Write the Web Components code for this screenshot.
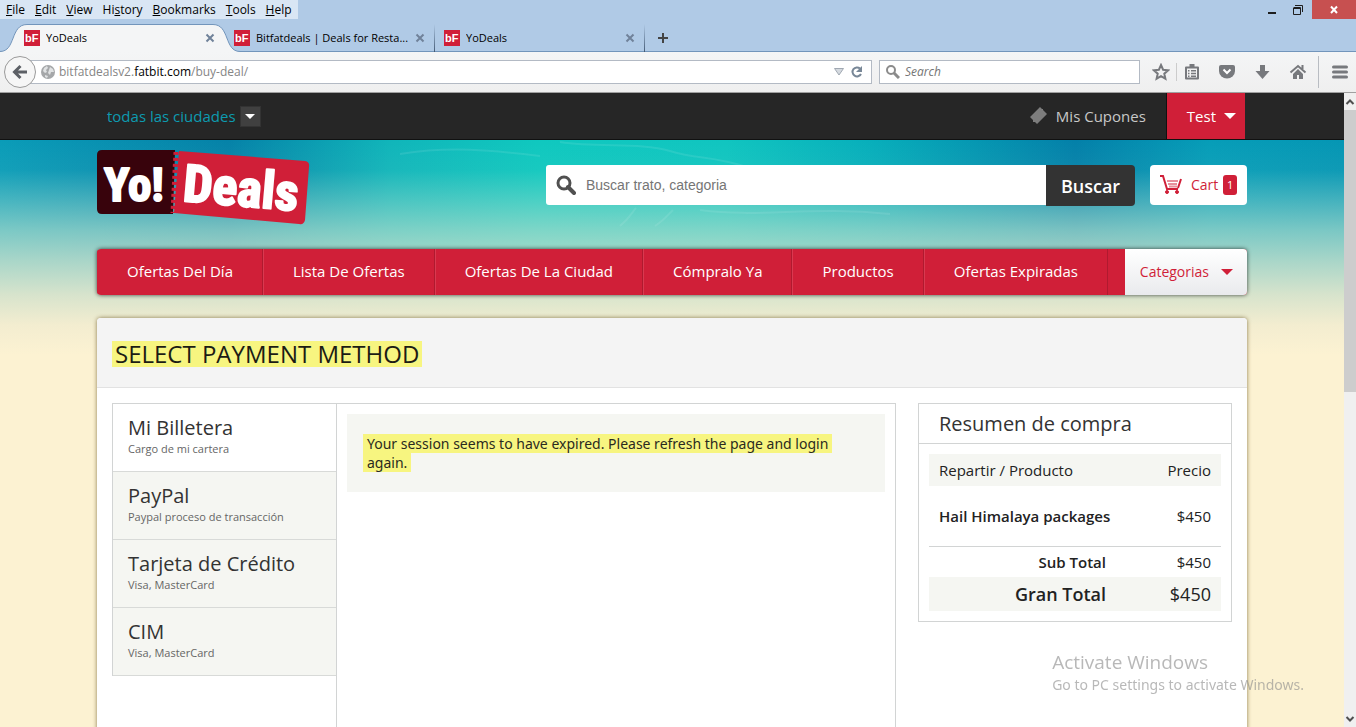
<!DOCTYPE html>
<html lang="es">
<head>
<meta charset="utf-8">
<meta name="viewport" content="width=device-width, initial-scale=1">
<title>YoDeals</title>
<style>
html, body { margin: 0; height: 100%; }
body { font-family: "Open Sans", "Noto Sans", sans-serif; font-size: 14px; line-height: 20px; color: #333; overflow: hidden; }
</style>
</head>
<body>
<browser-window>
  <menu-bar slot="menu"></menu-bar>
  <window-controls slot="menu"></window-controls>
  <tab-strip slot="tabs">
    <browser-tab active>YoDeals</browser-tab>
    <browser-tab>Bitfatdeals | Deals for Resta...</browser-tab>
    <browser-tab>YoDeals</browser-tab>
  </tab-strip>
  <nav-toolbar slot="toolbar"></nav-toolbar>
  <site-page>
    <site-topbar slot="top"></site-topbar>
    <site-header></site-header>
    <site-nav></site-nav>
    <payment-panel>
      <h1 slot="title">SELECT PAYMENT METHOD</h1>
      <payment-option slot="options" active>Mi Billetera<span slot="note">Cargo de mi cartera</span></payment-option>
      <payment-option slot="options">PayPal<span slot="note">Paypal proceso de transacción</span></payment-option>
      <payment-option slot="options">Tarjeta de Crédito<span slot="note">Visa, MasterCard</span></payment-option>
      <payment-option slot="options">CIM<span slot="note">Visa, MasterCard</span></payment-option>
      <session-message slot="content">Your session seems to have expired. Please refresh the page and login again.</session-message>
      <purchase-summary slot="aside"></purchase-summary>
    </payment-panel>
  </site-page>
  <page-scrollbar slot="scroll"></page-scrollbar>
  <activation-notice slot="overlay"></activation-notice>
</browser-window>

<script>
function define(name, markup) {
  const template = document.createElement('template');
  template.innerHTML = '<style>*,:host{box-sizing:border-box}a{color:inherit;text-decoration:none}button{font:inherit;border:0;padding:0;margin:0;background:none;color:inherit;cursor:pointer}input{font:inherit;border:0;padding:0;margin:0;outline:0;background:none;min-width:0}svg{display:block;flex:none}</style>' + markup;
  customElements.define(name, class extends HTMLElement {
    constructor() {
      super();
      this.attachShadow({ mode: 'open' }).append(template.content.cloneNode(true));
    }
  });
}

define('browser-window', `
<style>
:host { display: flex; flex-direction: column; height: 100vh; background: #b0cae6; position: relative; }
.menu { display: flex; justify-content: space-between; align-items: flex-start; height: 24px; }
.view { flex: 1; min-height: 0; display: flex; }
</style>
<div class="menu"><slot name="menu"></slot></div>
<slot name="tabs"></slot>
<slot name="toolbar"></slot>
<div class="view"><slot></slot><slot name="scroll"></slot></div>
<slot name="overlay"></slot>`);

define('menu-bar', `
<style>
:host { display: flex; height: 19px; padding: 0 1px; background: #d9e6f4; font-size: 12px; line-height: 19px; color: #000; }
button { padding: 0 5px; }
</style>
<button><u>F</u>ile</button><button><u>E</u>dit</button><button><u>V</u>iew</button><button>Hi<u>s</u>tory</button><button><u>B</u>ookmarks</button><button><u>T</u>ools</button><button><u>H</u>elp</button>`);

define('window-controls', `
<style>
:host { display: flex; height: 19px; }
button { width: 26px; display: grid; place-items: center; }
.close { width: 44px; background: #c75050; margin-left: 1px; }
</style>
<button aria-label="Minimize"><svg width="12" height="12"><path d="M2 8h8v2H2z" fill="#1e1e1e"/></svg></button>
<button aria-label="Restore"><svg width="12" height="12" fill="none" stroke="#1e1e1e"><path d="M1.500 4v6.500h7V3.500h-7M1 4.500h8M3 1.500h7.500V8"/></svg></button>
<button class="close" aria-label="Close"><svg width="10" height="10"><path d="M2 1.500l6 6.500M8 1.500L2 8" stroke="#fff" stroke-width="2"/></svg></button>`);

define('tab-strip', `
<style>
:host { display: flex; height: 28px; padding-left: 15px; box-shadow: inset 0 -1px #7295bb; }
button { width: 36px; display: grid; place-items: center; }
</style>
<slot></slot>
<button aria-label="New tab"><svg width="10" height="10"><path d="M5 0v10M0 5h10" stroke="#444" stroke-width="2"/></svg></button>`);

define('browser-tab', `
<style>
:host { display: block; flex: 0 1 210px; min-width: 0; position: relative; }
.row { height: 28px; display: flex; align-items: center; padding: 0 9px; gap: 6px; position: relative; font-size: 11px; color: #000; }
:host(:not([active])) { background: linear-gradient(transparent, #445a75) right / 1px 100% no-repeat; }
.title { flex: 1; white-space: nowrap; overflow: hidden; }
.shape { display: none; position: absolute; left: -15px; top: 0; width: calc(100% + 30px); height: 28px; }
:host([active]) .shape { display: block; }
:host([active]) { z-index: 1; }
.shape svg { width: 100%; }
</style>
<div class="shape"><svg height="28" viewBox="0 0 240 28"><path d="M0 28v-.500C16 27.500 10 .500 27 .500H213C230 .500 224 27.500 240 27.500v.500z" fill="#f4f5f6"/><path d="M0 27.500C16 27.500 10 .500 27 .500H213C230 .500 224 27.500 240 27.500" fill="none" stroke="#7295bb"/></svg></div>
<div class="row">
<svg width="16" height="16"><path d="M0 0h16v16H0z" fill="#d01f38"/><text x="1" y="12" font-family="Liberation Sans" font-size="11" font-weight="700" fill="#fff">bF</text></svg>
<span class="title"><slot></slot></span>
<button aria-label="Close tab"><svg width="12" height="10"><path d="M2.500 1.500l7 7M9.500 1.500l-7 7" stroke="#70829a" stroke-width="2"/></svg></button>
</div>`);

define('nav-toolbar', `
<style>
:host { display: flex; align-items: center; height: 41px; padding: 0 8px 0 4px; background: linear-gradient(#f4f5f6, #efefef); border-bottom: 1px solid #a0a0a0; font-size: 12px; color: #858585; }
.back { width: 32px; height: 32px; border: 1px solid #9a9a9a; border-radius: 50%; background: #f6f6f6; display: grid; place-items: center; z-index: 1; }
.url { flex: 1; height: 24px; display: flex; align-items: center; gap: 4px; margin-left: -8px; padding: 0 5px 0 12px; border: 1px solid #b3bac4; background: #fff; min-width: 0; }
.url a { flex: 1; white-space: nowrap; }
.url b { font-weight: 400; color: #000; }
.search { width: 261px; height: 24px; display: flex; align-items: center; gap: 5px; margin: 0 12px 0 7px; padding: 0 6px; border: 1px solid #b3bac4; background: #fff; }
.search input { flex: 1; font-style: italic; }
.search input::placeholder { color: #757575; opacity: 1; }
.icons { display: flex; align-items: center; gap: 19px; color: #77797d; }
.icons button:first-child { margin-right: -11px; padding-right: 6px; border-right: 1px solid #ccc; }
.icons button:last-child { padding-left: 13px; border-left: 1px solid #b8bcc2; height: 32px; margin: 0 0 0 -8px; }
</style>
<button class="back" aria-label="Back"><svg width="16" height="16" fill="none" stroke="#5d6066" stroke-width="3"><path d="M15 8H3M8.500 2L2.500 8l6 6"/></svg></button>
<div class="url">
<svg width="14" height="14" viewBox="0 0 14 14"><circle cx="7" cy="7" r="7" fill="#a5a7a9"/><path d="M3 3l3-2 1 2-2 2 1 2-2 1-2-2zM9 2l3 2 1 3-3 0-1 3-2-2 1-3zM4 10l3 1-1 2-2-1z" fill="#e0e2e3"/></svg>
<a href="#">bitfatdealsv2.<b>fatbit.com</b>/buy-deal/</a>
<button aria-label="History"><svg width="10" height="8"><path d="M.500 .500h9L5 7z" fill="#d4d9df" stroke="#a0a8b2"/></svg></button>
<button aria-label="Reload"><svg width="18" height="14"><path d="M12 3.500A4.500 4.500 0 1 0 13 9" fill="none" stroke="#788797" stroke-width="2"/><path d="M14 1v6H8z" fill="#788797"/></svg></button>
</div>
<label class="search"><svg width="14" height="14" fill="none" stroke="#8b8b8b" stroke-width="2"><circle cx="5" cy="5" r="4"/><path d="M8 8l5 5" stroke-width="3"/></svg><input type="search" placeholder="Search" aria-label="Search"></label>
<div class="icons">
<button aria-label="Bookmark"><svg width="18" height="18"><path d="M9 2l2.100 4.700 5 .600-3.800 3.400 1.100 5L9 13.200l-4.400 2.500 1.100-5L1.900 7.300l5-.600z" fill="none" stroke="currentColor" stroke-width="2"/></svg></button>
<button aria-label="Bookmarks list"><svg width="14" height="16"><path d="M1 3.500h12v11H1z" fill="none" stroke="currentColor" stroke-width="2" stroke-linejoin="round"/><path d="M4.500 0h5v3h-5zM3 6h1.500v1.500H3zM6 6h5v1.500H6zM3 8.700h1.500v1.500H3zM6 8.700h5v1.500H6zM3 11.400h1.500v1.500H3zM6 11.400h5v1.500H6z" fill="currentColor"/></svg></button>
<button aria-label="Pocket"><svg width="18" height="16"><path d="M3 1h12q2 0 2 2v4a8 7.500 0 0 1-16 0V3q0-2 2-2z" fill="currentColor"/><path d="M5.500 5.500L9 9l3.500-3.500" fill="none" stroke="#fff" stroke-width="2"/></svg></button>
<button aria-label="Downloads"><svg width="15" height="16"><path d="M5 1h5v6h4.500L7.500 15 .500 7H5z" fill="currentColor"/></svg></button>
<button aria-label="Home"><svg width="18" height="16"><path d="M9 5l5 5v5h-4v-4H8v4H4v-5z" fill="currentColor"/><path d="M1.500 8.500L9 2l7.500 6.500M13.500 1v4" fill="none" stroke="currentColor" stroke-width="2"/></svg></button>
<button aria-label="Menu"><svg width="16" height="14"><path d="M1.500 2h13M1.500 7h13M1.500 12h13" stroke="currentColor" stroke-width="3" stroke-linecap="round"/></svg></button>
</div>`);

define('page-scrollbar', `
<style>
:host { flex: none; width: 12px; display: flex; flex-direction: column; align-items: center; background: #f0f0f0; }
button { height: 17px; display: grid; place-items: center; }
.track { flex: 1; width: 12px; }
.thumb { height: 47%; background: #cdcdcd; }
</style>
<button aria-label="Scroll up"><svg width="10" height="8"><path d="M1.500 6L5 2.500 8.500 6" fill="none" stroke="#505050" stroke-width="2"/></svg></button>
<div class="track"><div class="thumb"></div></div>
<button aria-label="Scroll down"><svg width="10" height="8"><path d="M1.500 2L5 5.500 8.500 2" fill="none" stroke="#505050" stroke-width="2"/></svg></button>`);

define('activation-notice', `
<style>
:host { position: absolute; right: 52px; bottom: 32px; color: rgba(140,140,140,.62); pointer-events: none; white-space: nowrap; font-family: "Noto Sans", "Open Sans", sans-serif; font-size: 14px; line-height: 20px; z-index: 3; }
strong { display: block; font-family: "Open Sans", sans-serif; font-weight: 400; font-size: 19px; line-height: 26px; }
</style>
<strong>Activate Windows</strong>Go to PC settings to activate Windows.`);

define('site-page', `
<style>
:host { flex: 1; min-width: 0; overflow: hidden auto; scrollbar-width: none; background: #fcf2d2; }
.sea { position: relative; background:
 linear-gradient(rgba(170,222,205,0) 0, rgba(170,222,205,.060) 30px, rgba(170,222,205,.380) 60px, rgba(172,220,203,.700) 90px, rgba(190,222,203,.880) 120px, rgba(222,230,205,.970) 155px, #f3edd0 185px, #fcf2d2 215px),
 linear-gradient(90deg, #0a9cb8, #0582a8 17%, #10b5ba 29%, #0fc8bf 40%, #10c5c0 54%, #07aebb 65%, #0380a9 80%, #069db8 90%, #0596b4); }
.waves { position: absolute; inset: 0 0 auto 0; width: 100%; }
.wrap { position: relative; max-width: 1150px; margin: 0 auto; }
</style>
<slot name="top"></slot>
<div class="sea">
<svg class="waves" height="110" viewBox="0 0 1344 110" preserveAspectRatio="none" fill="none" stroke="#fff" stroke-opacity=".090" stroke-width="2"><path d="M560 2c40 6 80 0 110 9s40 4 80 17M400 14c50-8 90-4 140 2M620 86c10-8 12-14 16-18M655 86c8-5 10-8 18-16M700 70c60 8 110-4 190 4"/></svg>
<div class="wrap"><slot></slot></div>
</div>`);

define('site-topbar', `
<style>
:host { display: block; background: #262626; border-bottom: 1px solid #111; font-size: 15px; color: #c8c8c8; }
.wrap { max-width: 1150px; margin: 0 auto; height: 46px; display: flex; align-items: center; padding: 0 2px 0 10px; }
.city { display: flex; align-items: center; gap: 4px; color: #0d9bb0; }
.city button { width: 21px; height: 21px; background: #404040; border: 1px solid #333; display: grid; place-items: center; }
.coupons { margin-left: auto; display: flex; align-items: center; gap: 9px; padding-right: 21px; }
.user { height: 46px; display: flex; align-items: center; gap: 8px; padding: 0 9px 0 20px; background: #d01f38; color: #fff; box-shadow: -1px 0 #111; }
</style>
<div class="wrap">
<div class="city"><a href="#">todas las ciudades</a><button aria-label="Elegir ciudad"><svg width="10" height="5"><path d="M0 0h10L5 5z" fill="#fff"/></svg></button></div>
<a class="coupons" href="#"><svg width="18" height="18"><path d="M11 0l2 2 1 0 0 1 4 4-10 10-2-2-2 0 0-2L1 10z" fill="#7d7d7d"/></svg>Mis Cupones</a>
<a class="user" href="#">Test<svg width="12" height="6"><path d="M0 0h12L6 6z" fill="#fff"/></svg></a>
</div>`);

define('yo-logo', `
<style>
:host { display: block; }
text { font-family: "Liberation Sans Narrow", "Roboto Condensed", "Open Sans", sans-serif; font-weight: 700; fill: #fff; stroke: #fff; stroke-width: 2; stroke-linejoin: round; }
</style>
<a href="#" aria-label="Yo! Deals"><svg width="213" height="76" viewBox="0 0 213 76">
<path d="M5 0H78L76 64H5Q0 64 0 59V5Q0 0 5 0z" fill="#38030c"/>
<path d="M82 1L208 11Q213 12 212 17L208 70Q207 75 202 74L77 63z" fill="#d01f38"/>
<path d="M79 2L76 63" stroke="#d01f38" stroke-width="5" stroke-dasharray="3 3"/>
<text x="7" y="51" font-size="47">Yo!</text>
<text x="85" y="51" font-size="52" transform="rotate(5 85 51)">Deals</text>
</svg></a>`);

define('site-header', `
<style>
:host { display: flex; align-items: flex-start; height: 109px; padding-top: 10px; }
form { display: flex; margin: 15px 15px 0 auto; width: 589px; }
label { flex: 1; height: 40px; background: #fff; border-radius: 3px 0 0 3px; display: flex; align-items: center; gap: 10px; padding: 0 10px; min-width: 0; }
input { flex: 1; font: 14px/20px "Liberation Sans", Arial, sans-serif; }
input::placeholder { color: #757575; opacity: 1; }
form button { width: 89px; height: 41px; background: #333; color: #fff; font-size: 18px; font-weight: 600; border-radius: 0 4px 4px 0; }
.cart { margin-top: 15px; width: 97px; height: 40px; display: flex; align-items: center; padding: 0 10px; border-radius: 4px; background: #fff; color: #d01f38; }
.cart span { margin-left: 9px; }
.cart b { width: 14px; height: 20px; margin-left: 5px; border-radius: 3px; background: #d01f38; color: #fff; font-size: 11px; font-weight: 400; text-align: center; }
</style>
<yo-logo></yo-logo>
<form><label><svg width="20" height="20" fill="none" stroke="#505050"><circle cx="8" cy="8" r="6" stroke-width="3"/><path d="M12 12l6 6" stroke-width="4" stroke-linecap="round"/></svg><input type="text" placeholder="Buscar trato, categoria" aria-label="Buscar trato, categoria"></label><button type="button">Buscar</button></form>
<a class="cart" href="#"><svg width="22" height="22" fill="none" stroke="#d01f38"><path d="M0 2h3l4 13h11M18 14l3-9" stroke-width="2"/><path d="M7 7h11M8 10h9M9 12.500h8" stroke-opacity=".500" stroke-width="2"/><circle cx="7" cy="18" r="1.500" fill="#d01f38"/><circle cx="17" cy="18" r="1.500" fill="#d01f38"/></svg><span>Cart</span><b>1</b></a>`);

define('site-nav', `
<style>
:host { display: block; border-radius: 4px; box-shadow: 0 0 4px rgba(0,0,0,.700); }
nav { display: flex; height: 46px; border-radius: 4px; background: #d01f38; color: #fff; line-height: 44px; white-space: nowrap; overflow: hidden; }
a { padding: 0 29px; border-left: 1px solid #d93a50; border-right: 1px solid #b01a2f; font-size: 15px; }
a:first-child { border-left-color: #d01f38; }
button { margin-left: auto; padding: 0 14px 0 15px; display: flex; align-items: center; gap: 12px; color: #d01f38; background: linear-gradient(#fff, #e9eaed); }
</style>
<nav><a href="#">Ofertas Del Día</a><a href="#">Lista De Ofertas</a><a href="#">Ofertas De La Ciudad</a><a href="#">Cómpralo Ya</a><a href="#">Productos</a><a href="#">Ofertas Expiradas</a><button>Categorias<svg width="12" height="6"><path d="M0 0h12L6 6z" fill="#d01f38"/></svg></button></nav>`);

define('payment-panel', `
<style>
:host { display: block; margin-top: 23px; border-radius: 4px 4px 0 0; background: #fff; box-shadow: 0 0 4px rgba(90,70,20,.700); }
header { height: 70px; padding: 23px 15px 0; background: #f4f4f4; border-bottom: 1px solid #e2e2e2; border-radius: 4px 4px 0 0; }
::slotted(h1) { display: inline-block; margin: 0; padding: 0 3px; background: #f7f580; font-size: 24px; font-weight: 400; line-height: 26px; color: #1c1c14; }
.body { display: grid; grid-template-columns: 224px minmax(0, 1fr) 314px; align-items: start; padding: 15px; }
.options { border: 1px solid #d2d4d4; border-width: 1px 0 0 1px; }
.content { min-height: 420px; margin-right: 22px; padding: 10px; border: 1px solid #d2d4d4; }
</style>
<header><slot name="title"></slot></header>
<div class="body"><div class="options"><slot name="options"></slot></div><main class="content"><slot name="content"></slot></main><aside><slot name="aside"></slot></aside></div>`);

define('payment-option', `
<style>
:host { display: block; background: #f5f6f2; border-bottom: 1px solid #d8dad8; }
:host([active]) { background: #fff; }
a { display: block; padding: 11px 15px 14px; font-size: 20px; line-height: 26px; color: #333; }
small { display: block; font-size: 11px; line-height: 16px; color: #666; }
</style>
<a href="#"><slot></slot><small><slot name="note"></slot></small></a>`);

define('session-message', `
<style>
:host { display: block; padding: 20px; background: #f5f6f2; font-family: "Noto Sans", "Open Sans", sans-serif; line-height: 19px; color: #2a2a20; }
mark { background: #f7f580; color: inherit; padding: 0 4px; box-decoration-break: clone; -webkit-box-decoration-break: clone; }
p { margin: 0 -4px; }
</style>
<p><mark><slot></slot></mark></p>`);

define('purchase-summary', `
<style>
:host { display: block; border: 1px solid #d2d4d4; font-size: 15px; color: #222; }
h2 { margin: 0; padding: 0 20px; font-size: 20px; font-weight: 400; line-height: 39px; height: 40px; border-bottom: 1px solid #d2d4d4; color: #333; }
.pad { padding: 10px; }
table { width: 100%; border-collapse: collapse; }
th, td { padding: 0 10px; font-weight: 400; text-align: left; height: 32px; }
th:last-child, td:last-child { width: 105px; text-align: right; }
tr.shade { background: #f5f6f2; }
tbody td { height: 60px; border-bottom: 1px solid #d2d4d4; }
tbody td:first-child, tfoot th { font-weight: 600; }
tbody td:first-child { padding-right: 0; white-space: nowrap; }
tfoot th { text-align: right; }
tfoot th, tfoot td { height: 31px; }
tfoot .shade > * { height: 34px; font-size: 18px; }
</style>
<h2>Resumen de compra</h2>
<div class="pad"><table>
<thead><tr class="shade"><th scope="col">Repartir / Producto</th><th scope="col">Precio</th></tr></thead>
<tbody><tr><td>Hail Himalaya packages</td><td>$450</td></tr></tbody>
<tfoot><tr><th scope="row">Sub Total</th><td>$450</td></tr><tr class="shade"><th scope="row">Gran Total</th><td>$450</td></tr></tfoot>
</table></div>`);
</script>
</body>
</html>
